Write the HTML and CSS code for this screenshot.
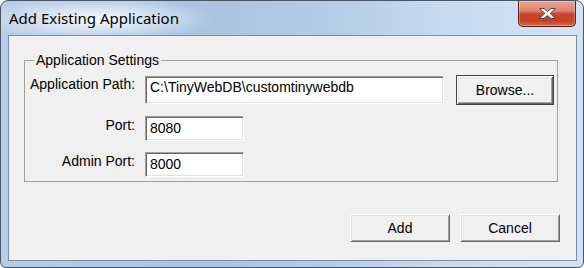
FILE: index.html
```html
<!DOCTYPE html>
<html lang="en">
<head>
    <meta charset="UTF-8">
    <title>Add Existing Application</title>
    <link rel="stylesheet" href="styles.css">
</head>
<body>
    <div class="window">
        <div class="titlebar">
            <span class="title">Add Existing Application</span>
            <button class="close-btn" title="Close">
                <svg width="19" height="13" viewBox="0 0 19 13">
                    <polygon points="1.5,1.5 6,1.5 9.5,4.6 13,1.5 17.5,1.5 12.2,6.5 17.5,11.5 13,11.5 9.5,8.4 6,11.5 1.5,11.5 6.8,6.5" fill="#fff" stroke="#4b4b4b" stroke-width="1" stroke-linejoin="round"/>
                </svg>
            </button>
        </div>
        <div class="client">
            <fieldset class="group">
                <legend>Application Settings</legend>
                <div class="settings">
                    <label class="label" for="path">Application Path:</label>
                    <input class="field field-path" id="path" type="text" value="C:\TinyWebDB\customtinywebdb">
                    <button class="btn btn-default">Browse...</button>

                    <label class="label" for="port">Port:</label>
                    <input class="field field-short" id="port" type="text" value="8080">
                    <span></span>

                    <label class="label" for="admin">Admin Port:</label>
                    <input class="field field-short" id="admin" type="text" value="8000">
                    <span></span>
                </div>
            </fieldset>
            <div class="actions">
                <button class="btn">Add</button>
                <button class="btn">Cancel</button>
            </div>
        </div>
    </div>
</body>
</html>
```

FILE: styles.css
```css
body {
    margin: 0;
    background-color: #ffffff;
    font-family: "Liberation Sans", Arial, sans-serif;
    font-size: 14px;
    color: #000;
}

.window {
    width: 584px;
    height: 268px;
    box-sizing: border-box;
    border: 1px solid #4a5566;
    border-radius: 8px 8px 6px 6px;
    padding: 0 6px 6px 7px;
    display: flex;
    flex-direction: column;
    background:
        radial-gradient(ellipse 120px 22px at 95px 18px, rgba(255, 255, 255, 0.9), rgba(255, 255, 255, 0) 100%),
        linear-gradient(90deg, #b7cde7 0%, #a9c3e0 35%, #b3cbe6 55%, #c7daee 75%, #d3e3f3 100%);
}

.titlebar {
    height: 34px;
    display: flex;
    align-items: flex-start;
    flex-shrink: 0;
}

.title {
    font-family: "Noto Sans", "Open Sans", sans-serif;
    font-size: 15px;
    line-height: 20px;
    padding: 7px 0 0 1px;
    color: #000;
}

.close-btn {
    margin-left: auto;
    margin-right: 1px;
    width: 58px;
    height: 26px;
    padding: 0;
    border: 1px solid #5a1f14;
    border-top: none;
    border-radius: 0 0 5px 5px;
    background: linear-gradient(#eaa595 0%, #de806b 40%, #c8462b 52%, #c43f25 78%, #d9684c 100%);
    box-shadow: inset 0 0 0 1px rgba(255, 255, 255, 0.3);
    display: flex;
    align-items: center;
    justify-content: center;
}

.client {
    flex: 1;
    border: 1px solid #7b8ea6;
    background-color: #f0f0f0;
    padding: 15px 0 0 15px;
    display: flex;
    flex-direction: column;
}

.group {
    width: 534px;
    box-sizing: border-box;
    margin: 0;
    padding: 6px 3px 4px 5px;
    border: 1px solid #a0a0a0;
    border-radius: 0;
}

.group legend {
    padding: 0 2px;
    margin-left: 4px;
    line-height: 18px;
}

.settings {
    display: grid;
    grid-template-columns: 105px 301px 98px;
    column-gap: 10px;
    row-gap: 11px;
    align-items: start;
}

.label {
    text-align: right;
    white-space: nowrap;
    line-height: 18px;
}

.field {
    font-family: "Liberation Sans", Arial, sans-serif;
    font-size: 14px;
    line-height: 16px;
    box-sizing: border-box;
    margin: 0;
    background: #fff;
    border: 1px solid;
    border-color: #a0a0a0 #ffffff #ffffff #a0a0a0;
    box-shadow: inset 1px 1px #696969, inset -1px -1px #e3e3e3;
    outline: none;
}

.field-path {
    width: 299px;
    height: 28px;
    margin-top: 1px;
    padding: 1px 3px 7px 4px;
}

.field-short {
    width: 99px;
    height: 25px;
    padding: 2px 3px 3px 4px;
}

.btn {
    font-family: "Liberation Sans", Arial, sans-serif;
    font-size: 14px;
    color: #000;
    width: 100px;
    height: 28px;
    padding: 0;
    margin: 0;
    background: #f0f0f0;
    border: 1px solid;
    border-color: #ffffff #696969 #696969 #ffffff;
    box-shadow: inset 1px 1px #e3e3e3, inset -1px -1px #a0a0a0;
}

.btn-default {
    width: 98px;
    height: 30px;
    border: 1px solid #404040;
    box-shadow: inset 1px 1px #fff, inset -1px -1px #696969, inset 2px 2px #e3e3e3, inset -2px -2px #a0a0a0;
}

.actions {
    display: flex;
    justify-content: flex-end;
    gap: 10px;
    margin-top: 32px;
    padding-right: 16px;
}
```
